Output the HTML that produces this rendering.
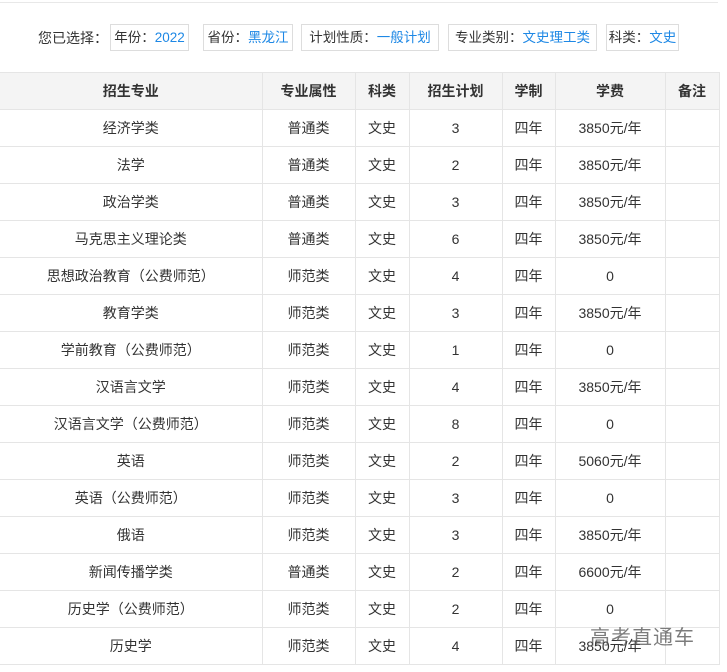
<!DOCTYPE html>
<html><head><meta charset="utf-8"><style>
body{margin:0;width:727px;height:672px;background:#fff;font-family:"Liberation Sans","Noto Sans CJK SC",sans-serif;font-size:14px;color:#333;position:relative;overflow:hidden}
.top{position:absolute;left:0;top:2px;width:718px;border-top:1px solid #e8e8e8}
.tag{position:absolute;top:24px;height:27px;line-height:26px;border:1px solid #ddd;padding:0 1px;box-sizing:border-box;white-space:nowrap;font-size:13.5px;text-align:center}
.tag b{font-weight:normal;color:#1e88e5}
table{position:absolute;left:0;top:72px;border-collapse:collapse;width:719px;table-layout:fixed}
td,th{border:1px solid #e5e5e5;height:36px;text-align:center;padding:0;font-size:14px}
th{background:#f4f4f4;font-weight:bold;color:#333}
tr td:first-child,tr th:first-child{border-left:none}
.wm{position:absolute;left:590px;top:621px;font-size:20px;color:rgba(80,80,80,.75);letter-spacing:1px}
</style></head><body>
<div class="top"></div>
<div style="position:absolute;left:38px;top:24px;line-height:28px">您已选择：</div>
<div class="tag" style="left:110px;width:79px">年份：<b>2022</b></div>
<div class="tag" style="left:203px;width:90px">省份：<b>黑龙江</b></div>
<div class="tag" style="left:301px;width:138px">计划性质：<b>一般计划</b></div>
<div class="tag" style="left:448px;width:149px">专业类别：<b>文史理工类</b></div>
<div class="tag" style="left:606px;width:73px">科类：<b>文史</b></div>
<table>
<colgroup><col style="width:262px"><col style="width:93px"><col style="width:54px"><col style="width:93px"><col style="width:53px"><col style="width:110px"><col style="width:54px"></colgroup>
<tr><th>招生专业</th><th>专业属性</th><th>科类</th><th>招生计划</th><th>学制</th><th>学费</th><th>备注</th></tr>
<tr><td>经济学类</td><td>普通类</td><td>文史</td><td>3</td><td>四年</td><td>3850元/年</td><td></td></tr>
<tr><td>法学</td><td>普通类</td><td>文史</td><td>2</td><td>四年</td><td>3850元/年</td><td></td></tr>
<tr><td>政治学类</td><td>普通类</td><td>文史</td><td>3</td><td>四年</td><td>3850元/年</td><td></td></tr>
<tr><td>马克思主义理论类</td><td>普通类</td><td>文史</td><td>6</td><td>四年</td><td>3850元/年</td><td></td></tr>
<tr><td>思想政治教育（公费师范）</td><td>师范类</td><td>文史</td><td>4</td><td>四年</td><td>0</td><td></td></tr>
<tr><td>教育学类</td><td>师范类</td><td>文史</td><td>3</td><td>四年</td><td>3850元/年</td><td></td></tr>
<tr><td>学前教育（公费师范）</td><td>师范类</td><td>文史</td><td>1</td><td>四年</td><td>0</td><td></td></tr>
<tr><td>汉语言文学</td><td>师范类</td><td>文史</td><td>4</td><td>四年</td><td>3850元/年</td><td></td></tr>
<tr><td>汉语言文学（公费师范）</td><td>师范类</td><td>文史</td><td>8</td><td>四年</td><td>0</td><td></td></tr>
<tr><td>英语</td><td>师范类</td><td>文史</td><td>2</td><td>四年</td><td>5060元/年</td><td></td></tr>
<tr><td>英语（公费师范）</td><td>师范类</td><td>文史</td><td>3</td><td>四年</td><td>0</td><td></td></tr>
<tr><td>俄语</td><td>师范类</td><td>文史</td><td>3</td><td>四年</td><td>3850元/年</td><td></td></tr>
<tr><td>新闻传播学类</td><td>普通类</td><td>文史</td><td>2</td><td>四年</td><td>6600元/年</td><td></td></tr>
<tr><td>历史学（公费师范）</td><td>师范类</td><td>文史</td><td>2</td><td>四年</td><td>0</td><td></td></tr>
<tr><td>历史学</td><td>师范类</td><td>文史</td><td>4</td><td>四年</td><td>3850元/年</td><td></td></tr>
</table>
<div class="wm">高考直通车</div>
</body></html>
